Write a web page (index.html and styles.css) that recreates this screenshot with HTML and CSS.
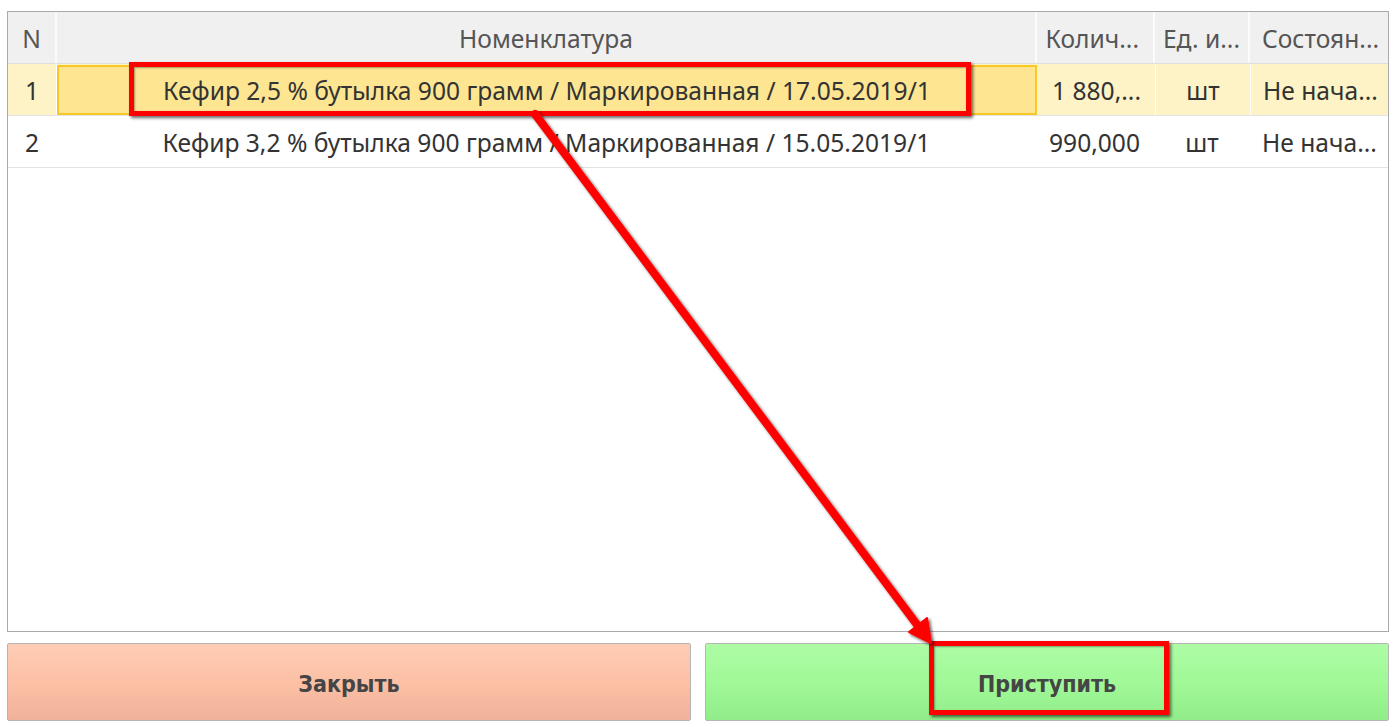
FILE: index.html
```html
<!DOCTYPE html>
<html lang="ru">
<head>
<meta charset="utf-8">
<title>Задание</title>
<link rel="stylesheet" href="styles.css">
</head>
<body>
<div class="page">
  <div class="grid">
    <div class="row head">
      <div class="c c-n">N</div>
      <div class="c c-name">Номенклатура</div>
      <div class="c c-qty">Колич...</div>
      <div class="c c-unit">Ед. и...</div>
      <div class="c c-state">Состоян...</div>
    </div>
    <div class="row sel">
      <div class="c c-n">1</div>
      <div class="c c-name focus">Кефир 2,5 % бутылка 900 грамм / Маркированная / 17.05.2019/1</div>
      <div class="c c-qty">1 880,...</div>
      <div class="c c-unit">шт</div>
      <div class="c c-state">Не нача...</div>
    </div>
    <div class="row">
      <div class="c c-n">2</div>
      <div class="c c-name">Кефир 3,2 % бутылка 900 грамм / Маркированная / 15.05.2019/1</div>
      <div class="c c-qty">990,000</div>
      <div class="c c-unit">шт</div>
      <div class="c c-state">Не нача...</div>
    </div>
  </div>
  <div class="buttons">
    <button class="btn btn-close">Закрыть</button>
    <button class="btn btn-go">Приступить</button>
  </div>
</div>
<div class="mark mark-row"></div>
<div class="mark mark-btn"></div>
<svg class="arrow" width="1399" height="727" viewBox="0 0 1399 727">
  <defs>
    <filter id="sh" x="-10%" y="-10%" width="130%" height="130%">
      <feDropShadow dx="2" dy="2" stdDeviation="1.6" flood-color="#000" flood-opacity="0.6"/>
    </filter>
  </defs>
  <g filter="url(#sh)">
    <line x1="535" y1="114" x2="921" y2="630" stroke="#ff0000" stroke-width="8" stroke-linecap="round"/>
    <polygon points="931,643 927,618 909,632" fill="#ff0000" stroke="#ff0000" stroke-width="2" stroke-linejoin="round"/>
  </g>
</svg>
</body>
</html>
```

FILE: styles.css
```css
html, body {
  margin: 0;
  padding: 0;
  background: #ffffff;
}
body {
  font-family: "Noto Sans", "Open Sans", sans-serif;
  color: #333;
}
.page {
  box-sizing: border-box;
  width: 1399px;
  height: 727px;
  padding: 11px 10px 6px 7px;
  display: flex;
  flex-direction: column;
  gap: 11px;
}
.grid {
  height: 621px;
  box-sizing: border-box;
  border: 1px solid #a9a9a9;
  background: #fff;
  display: flex;
  flex-direction: column;
}
.row {
  display: flex;
  height: 51px;
  border-bottom: 1px solid #e3e3e3;
  font-size: 24.6px;
  color: #333;
}
.row.head {
  height: 51px;
  background: #f0f0f0;
  color: #555;
  border-bottom: 1px solid #dedede;
}
.row.sel {
  background: #fdf3c6;
}
.c {
  box-sizing: border-box;
  display: flex;
  align-items: center;
  padding-top: 1px;
  white-space: nowrap;
  overflow: hidden;
  border-right: 1px solid #fff;
}
.row.head .c {
  border-right: 2px solid #fbfbfb;
}
.c-n { width: 49px; justify-content: center; }
.c-name { width: 980px; justify-content: center; }
.c-qty { width: 118px; justify-content: flex-end; padding-right: 14px; }
.c-unit { width: 95px; justify-content: center; }
.c-state { flex: 1; justify-content: flex-start; padding-left: 12px; border-right: none; }
.row.head .c-state { border-right: none; }
.c.focus {
  background: #fde592;
  border: 2px solid #f8c925;
  margin: 1px 1px 0 0;
}
.buttons {
  display: flex;
  gap: 14px;
  height: 78px;
}
.btn {
  flex: 1;
  border: 1px solid #b5b5b5;
  border-radius: 2px;
  font-family: "DejaVu Sans Condensed", "DejaVu Sans", sans-serif;
  font-weight: bold;
  font-size: 23px;
  color: #454545;
  padding: 4px 0 0 0;
}
.btn-close {
  background: linear-gradient(#fecdb5, #fbbfa4 55%, #f0b19b);
}
.btn-go {
  background: linear-gradient(#aefca5, #9ff895 55%, #91ec89);
}
.mark {
  position: absolute;
  box-sizing: border-box;
  border: 5px solid #ff0000;
  box-shadow: 2px 2px 3px rgba(0,0,0,0.6), inset 1px 1px 2px rgba(0,0,0,0.35);
}
.mark-row {
  left: 129px;
  top: 62px;
  width: 842px;
  height: 54px;
}
.mark-btn {
  left: 929px;
  top: 641px;
  width: 240px;
  height: 74px;
}
.arrow {
  position: absolute;
  left: 0;
  top: 0;
  pointer-events: none;
}
```
